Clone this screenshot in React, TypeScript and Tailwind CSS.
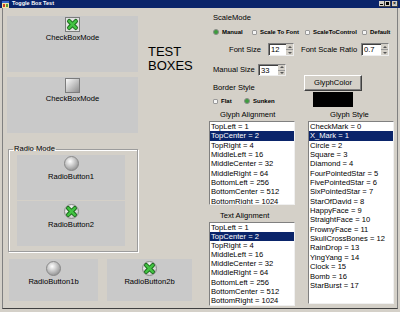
import React from 'react';

const glyphAlign = [
  'TopLeft = 1',
  'TopCenter = 2',
  'TopRight = 4',
  'MiddleLeft = 16',
  'MiddleCenter = 32',
  'MiddleRight = 64',
  'BottomLeft = 256',
  'BottomCenter = 512',
  'BottomRight = 1024',
];

const glyphStyles = [
  'CheckMark = 0',
  'X_Mark = 1',
  'Circle = 2',
  'Square = 3',
  'Diamond = 4',
  'FourPointedStar = 5',
  'FivePointedStar = 6',
  'SixPointedStar = 7',
  'StarOfDavid = 8',
  'HappyFace = 9',
  'StraightFace = 10',
  'FrownyFace = 11',
  'SkullCrossBones = 12',
  'RainDrop = 13',
  'YingYang = 14',
  'Clock = 15',
  'Bomb = 16',
  'StarBurst = 17',
];

// green X used by the checked toggle boxes
function XMark() {
  return (
    <g strokeLinecap="round">
      <path d="M4.2 4.2 L10.8 10.8 M10.8 4.2 L4.2 10.8" stroke="#1d6b1d" strokeWidth="4.4" />
      <path d="M4.2 4.2 L10.8 10.8 M10.8 4.2 L4.2 10.8" stroke="#43c443" strokeWidth="2.4" />
    </g>
  );
}

function CheckGlyph({ checked }: { checked?: boolean }) {
  return (
    <svg width="15" height="15" viewBox="0 0 15 15">
      <defs>
        <linearGradient id="cbgrad" x1="0" y1="0" x2="1" y2="1">
          <stop offset="0" stopColor="#ffffff" />
          <stop offset="1" stopColor="#8a8a8a" />
        </linearGradient>
      </defs>
      <rect x="0.5" y="0.5" width="14" height="14" fill={checked ? '#e2e2e2' : 'url(#cbgrad)'} stroke="#7c7c7c" />
      {checked && <XMark />}
    </svg>
  );
}

function RadioGlyph({ checked }: { checked?: boolean }) {
  return (
    <svg width="15" height="15" viewBox="0 0 15 15">
      <defs>
        <radialGradient id="rbgrad" cx="0.4" cy="0.35" r="0.7">
          <stop offset="0" stopColor="#ffffff" />
          <stop offset="1" stopColor="#8e8e8e" />
        </radialGradient>
        <radialGradient id="rbgrad2" cx="0.4" cy="0.35" r="0.7">
          <stop offset="0" stopColor="#ffffff" />
          <stop offset="1" stopColor="#c4c4c4" />
        </radialGradient>
      </defs>
      <circle cx="7.5" cy="7.5" r="7" fill={checked ? 'url(#rbgrad2)' : 'url(#rbgrad)'} stroke="#8a8a8a" />
      {checked && <XMark />}
    </svg>
  );
}

function SmallRadio({ checked }: { checked?: boolean }) {
  return (
    <span
      className={
        checked
          ? 'w-[6px] h-[6px] rounded-full border border-[#8a8a8a] bg-[#3d9d3d] shrink-0'
          : 'w-[5px] h-[5px] rounded-[1px] border border-[#9a9a9a] bg-[#f4f4f4] shrink-0'
      }
    />
  );
}

function ToggleBox({ label, children, className }: { label: string; children: React.ReactNode; className: string }) {
  return (
    <div className={`bg-[#c9c9c9] flex flex-col items-center gap-[1px] pt-[1px] ${className}`}>
      {children}
      <span className="text-[7.6px] leading-[10px]">{label}</span>
    </div>
  );
}

function Spin({ value, className }: { value: string; className: string }) {
  return (
    <div className={`flex bg-white border border-t-[#808080] border-l-[#808080] border-b-[#eeeeee] border-r-[#eeeeee] shadow-[inset_1px_1px_0_#404040] ${className}`}>
      <span className="flex-1 pl-[2px] text-[7.6px] leading-[11px]">{value}</span>
      <div className="w-[7px] flex flex-col">
        <div className="flex-1 bg-[#d4d0c8] border-b border-b-[#9a9a9a] flex items-center justify-center">
          <svg width="4" height="2" viewBox="0 0 4 2"><path d="M0 2 L2 0 L4 2Z" fill="#555" /></svg>
        </div>
        <div className="flex-1 bg-[#d4d0c8] flex items-center justify-center">
          <svg width="4" height="2" viewBox="0 0 4 2"><path d="M0 0 L2 2 L4 0Z" fill="#555" /></svg>
        </div>
      </div>
    </div>
  );
}

function ListBox({
  items,
  selected,
  className,
  rowClass = 'leading-[9.35px]',
}: {
  items: string[];
  selected: number;
  className: string;
  rowClass?: string;
}) {
  return (
    <div className={`bg-white border border-t-[#808080] border-l-[#808080] border-b-[#f0f0f0] border-r-[#f0f0f0] overflow-hidden ${className}`}>
      {items.map((it, i) => (
        <div
          key={it}
          className={`px-[1px] text-[7.6px] whitespace-nowrap ${rowClass} ${i === selected ? 'bg-[#0a246a] text-white' : 'text-black'}`}
        >
          {it}
        </div>
      ))}
    </div>
  );
}

function TitleBar() {
  return (
    <div className="h-[8px] bg-[#0a246a] flex items-center pl-[2px] pr-[2px]">
      <svg width="7" height="7" viewBox="0 0 7 7">
        <rect x="0" y="0" width="7" height="7" fill="#f2e6a0" />
        <rect x="0" y="0" width="7" height="2" fill="#3a6ad0" />
        <rect x="1" y="3" width="2" height="3" fill="#d04020" />
        <rect x="4" y="3" width="2" height="3" fill="#5a9a3a" />
      </svg>
      <span className="ml-[3px] text-white font-bold text-[5.5px] leading-none">Toggle Box Test</span>
      <div className="ml-auto flex">
        <span className="w-[6px] h-[6px] bg-[#d4d0c8] border-r border-b border-[#404040] flex items-end justify-center pb-[1px]">
          <span className="w-[3px] h-[1px] bg-black" />
        </span>
        <span className="w-[6px] h-[6px] bg-[#d4d0c8] border-r border-b border-[#404040] flex items-center justify-center">
          <span className="w-[3px] h-[3px] border border-black border-t-2" />
        </span>
        <span className="ml-[1px] w-[6px] h-[6px] bg-[#d4d0c8] border-r border-b border-[#404040] flex items-center justify-center text-[5px] leading-none font-bold">
          ×
        </span>
      </div>
    </div>
  );
}

export default function App() {
  return (
    <div className="w-[400px] h-[312px] bg-[#d4d0c8] flex flex-col font-['Liberation_Sans',Arial,sans-serif] text-black overflow-hidden">
      <TitleBar />
      <div className="flex-1 flex px-[2px] pb-[3px]">
        <div className="flex-1 flex border-l border-l-[#808080] border-r border-r-[#808080] border-b border-b-[#404040]">
          {/* left: toggle boxes */}
          <div className="w-[197px] pl-[4px] pt-[8px] flex flex-col">
            <div className="flex items-start">
              <div className="w-[131px] flex flex-col">
                <ToggleBox label="CheckBoxMode" className="h-[56px]">
                  <CheckGlyph checked />
                </ToggleBox>
                <ToggleBox label="CheckBoxMode" className="h-[56px] mt-[5px]">
                  <CheckGlyph />
                </ToggleBox>
                <fieldset className="mt-[11px] ml-[1px] w-[130px] border border-[#9c9c9c] shadow-[inset_1px_1px_0_#ffffff,1px_1px_0_#ffffff] pb-[5px]">
                  <legend className="ml-[4px] px-[1px] text-[7.6px] leading-[10px]">Radio Mode</legend>
                  <div className="flex flex-col gap-[1px] pl-[8px] mt-[1px]">
                    <ToggleBox label="RadioButton1" className="w-[108px] h-[45px]">
                      <RadioGlyph />
                    </ToggleBox>
                    <ToggleBox label="RadioButton2" className="w-[108px] h-[45px] pt-[3px]">
                      <RadioGlyph checked />
                    </ToggleBox>
                  </div>
                </fieldset>
              </div>
              <div className="ml-[10px] mt-[29px] text-[13px] leading-[14px]">
                <div>TEST</div>
                <div>BOXES</div>
              </div>
            </div>
            <div className="flex mt-[7px] ml-[2px] gap-[9px]">
              <ToggleBox label="RadioButton1b" className="w-[89px] h-[42px] pt-[2px]">
                <RadioGlyph />
              </ToggleBox>
              <ToggleBox label="RadioButton2b" className="w-[85px] h-[42px] pt-[2px]">
                <RadioGlyph checked />
              </ToggleBox>
            </div>
          </div>

          {/* right: settings */}
          <div className="flex-1 pl-[9px] pt-[5px] flex flex-col text-[7.6px]">
            <div className="pl-[4px] leading-[10px]">ScaleMode</div>
            <div className="mt-[4px] h-[10px] flex items-center pl-[4px] text-[6px] font-bold">
              <div className="w-[39px] flex items-center gap-[3px]"><SmallRadio checked /><span>Manual</span></div>
              <div className="w-[53px] flex items-center gap-[3px]"><SmallRadio /><span>Scale To Font</span></div>
              <div className="w-[57px] flex items-center gap-[3px]"><SmallRadio /><span>ScaleToControl</span></div>
              <div className="flex items-center gap-[3px]"><SmallRadio /><span>Default</span></div>
            </div>
            <div className="mt-[6px] h-[13px] flex items-center pl-[20px]">
              <span className="w-[39px] leading-[10px]">Font Size</span>
              <Spin value="12" className="w-[26px] h-[13px]" />
              <span className="ml-[7px] w-[60px] leading-[10px]">Font Scale Ratio</span>
              <Spin value="0.7" className="w-[28px] h-[13px]" />
            </div>
            <div className="flex">
              <div className="w-[95px] flex flex-col">
                <div className="mt-[8px] h-[12px] flex items-center pl-[4px]">
                  <span className="w-[45px] leading-[10px]">Manual Size</span>
                  <Spin value="33" className="w-[28px] h-[12px]" />
                </div>
                <div className="mt-[7px] pl-[4px] leading-[10px]">Border Style</div>
                <div className="mt-[3px] h-[10px] flex items-center pl-[4px] text-[6px] font-bold">
                  <div className="w-[31px] flex items-center gap-[3px]"><SmallRadio /><span>Flat</span></div>
                  <div className="flex items-center gap-[3px]"><SmallRadio checked /><span>Sunken</span></div>
                </div>
              </div>
              <div className="flex flex-col">
                <button className="mt-[19px] w-[58px] h-[16px] bg-[#d4d0c8] border border-t-white border-l-white border-b-[#404040] border-r-[#404040] shadow-[inset_-1px_-1px_0_#808080] text-[7.6px] leading-none">
                  GlyphColor
                </button>
                <div className="mt-[1px] ml-[9px] w-[40px] h-[15px] bg-black" />
              </div>
            </div>
            <div className="flex">
              <div className="w-[86px] flex flex-col">
                <div className="mt-[3px] pl-[11px] leading-[10px]">Glyph Alignment</div>
                <ListBox items={glyphAlign} selected={1} className="mt-[1px] h-[84px]" />
                <div className="mt-[6px] pl-[11px] leading-[10px]">Text Alignment</div>
                <ListBox items={glyphAlign} selected={1} className="mt-[1px] h-[84px]" rowClass="leading-[9.1px]" />
              </div>
              <div className="ml-[13px] w-[86px] flex flex-col">
                <div className="mt-[3px] pl-[22px] leading-[10px]">Glyph Style</div>
                <ListBox items={glyphStyles} selected={1} className="mt-[1px] h-[183px]" />
              </div>
            </div>
          </div>
        </div>
      </div>
    </div>
  );
}
